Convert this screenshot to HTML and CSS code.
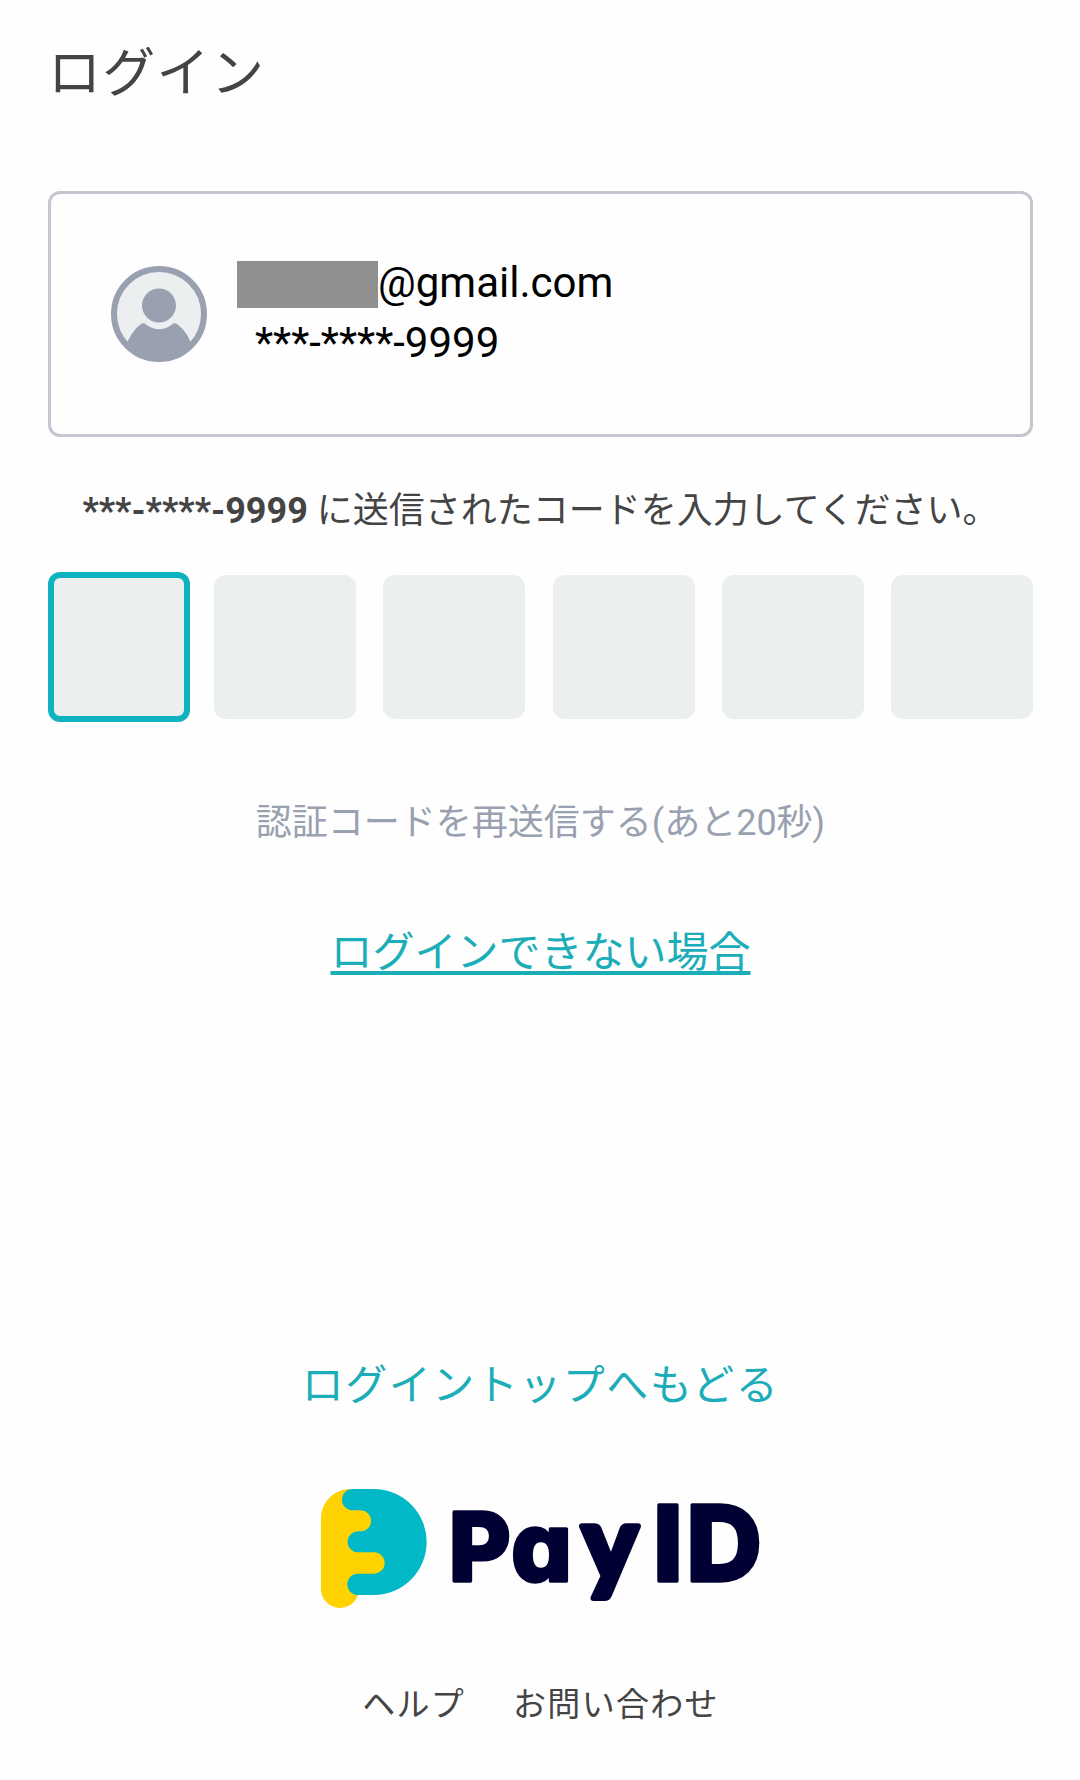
FILE: index.html
```html
<!DOCTYPE html>
<html lang="ja">
<head>
<meta charset="utf-8">
<title>ログイン</title>
<link rel="stylesheet" href="styles.css">
</head>
<body>
<main class="page">
  <h1 class="title">ログイン</h1>
  <section class="account">
    <svg class="avatar" viewBox="0 0 96 96">
      <circle cx="48" cy="48" r="45" fill="#ebeff0" stroke="#99a1b0" stroke-width="6"/>
      <circle cx="48" cy="39.500" r="17" fill="#99a1b0"/>
      <path d="M16 77C20 68 25 61 31 57.500Q33 56.500 35 58.500Q48 68 61 58.500Q63 56.500 65 57.500C71 61 77 69 80 77Q66 94 48 94Q30 94 16 77Z" fill="#99a1b0"/>
    </svg>
    <div class="identity">
      <div class="email"><span class="mask"></span>@gmail.com</div>
      <div class="phone">***-****-9999</div>
    </div>
  </section>
  <p class="instruction"><b>***-****-9999</b> に送信されたコードを入力してください。</p>
  <div class="code">
    <span class="digit active"></span><span class="digit"></span><span class="digit"></span><span class="digit"></span><span class="digit"></span><span class="digit"></span>
  </div>
  <p class="resend">認証コードを再送信する(あと20秒)</p>
  <a class="trouble">ログインできない場合</a>
  <a class="back">ログイントップへもどる</a>
  <svg class="logo" viewBox="120 444 1326 372">
    <path d="M207 447C160 449 123 489 123 535V750A57 57 0 0 0 234 765L330 690V500Z" fill="#ffd202"/>
    <path d="M218 447H281A159 159 0 0 1 281 765H234A31.500 31.500 0 0 1 234 701H282A31.500 31.500 0 0 0 282 637H234A31.500 31.500 0 0 1 234 574H242A31.500 31.500 0 0 0 242 511H218A32 32 0 0 1 218 447Z" fill="#00b8c6"/>
    <g class="wordmark">
      <text class="small" x="506" y="723">P</text>
      <text class="small" x="694" y="723">a</text>
      <text class="small tail" x="906" y="722">y</text>
      <text class="large" x="1119" y="723">I</text>
      <text class="large" x="1219" y="723">D</text>
    </g>
  </svg>
  <nav class="links"><a>ヘルプ</a><a>お問い合わせ</a></nav>
</main>
</body>
</html>
```
FILE: styles.css
```css
* { box-sizing: border-box; }
body {
  margin: 0;
  background: #fefefe;
  color: #444;
  font-family: Roboto, "Noto Sans CJK JP", sans-serif;
}
.page {
  display: flex;
  flex-direction: column;
  align-items: center;
  height: 1780px;
  padding: 0 47px 0 48px;
}
.title {
  align-self: flex-start;
  margin: 34px 0 0;
  height: 80px;
  font-size: 53px;
  line-height: 80px;
  font-weight: 400;
  letter-spacing: 1.3px;
}
.account {
  display: flex;
  align-items: flex-start;
  width: 985px;
  height: 246px;
  margin-top: 77px;
  padding: 67px 60px 0;
  border: 3px solid #c5c7d0;
  border-radius: 12px;
}
.avatar { width: 96px; height: 96px; margin-top: 5px; }
.identity { margin-left: 30px; color: #000; font-size: 42px; }
.email { display: flex; height: 47px; line-height: 43px; }
.mask { width: 141px; height: 47px; background: #909090; }
.phone { height: 70px; line-height: 70px; padding-left: 18px; }
.instruction {
  margin: 48px 0 0;
  height: 52px;
  line-height: 52px;
  font-size: 36px;
  white-space: nowrap;
}
.code { display: flex; justify-content: space-between; align-items: center; width: 985px; height: 150px; margin-top: 35px; }
.digit { width: 142px; height: 144px; border-radius: 12px; background: #ebeff0; }
.digit.active { height: 150px; margin-right: -3px; border: 6px solid #0fb3c0; }
.resend { margin: 75px 0 0; height: 52px; line-height: 52px; font-size: 36px; color: #99a1b0; }
.trouble {
  margin-top: 74px;
  height: 60px;
  line-height: 60px;
  font-size: 42px;
  color: #1badb8;
  text-decoration: underline;
  text-decoration-thickness: 4px;
  text-underline-offset: 4px;
  text-decoration-skip-ink: none;
}
.back { margin-top: 373px; height: 60px; line-height: 60px; font-size: 42px; letter-spacing: 1.500px; color: #1badb8; }
.logo { width: 442px; height: 124px; margin-top: 72px; overflow: visible; }
.wordmark { fill: #000033; stroke: #000033; stroke-width: 10; stroke-linejoin: round; font-family: Inter, sans-serif; font-weight: 800; font-feature-settings: "cv11"; }
.small { font-size: 285px; }
.tail { font-family: Lato, sans-serif; font-weight: 900; font-size: 314px; stroke-width: 18; }
.large { font-size: 314px; }
.links { display: flex; gap: 48px; height: 50px; margin-top: 68px; line-height: 50px; font-size: 33px; letter-spacing: 1.3px; }
```
